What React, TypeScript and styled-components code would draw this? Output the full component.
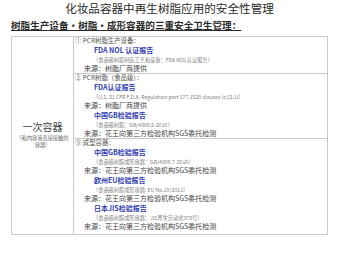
import React from "react";
import styled, { createGlobalStyle, css } from "styled-components";

const GlobalStyle = createGlobalStyle`
  html, body { margin: 0; padding: 0; background: #ffffff; }
  body { font-family: "Noto Sans CJK SC", "Noto Sans", sans-serif; color: #333; }
`;

const Page = styled.div`
  width: 340px;
  height: 255px;
  box-sizing: border-box;
  padding: 1px 12px 0 11px;
  overflow: hidden;
`;

const Title = styled.h1`
  margin: 0;
  font-size: 11.6px;
  line-height: 15px;
  font-weight: 400;
  text-align: center;
  color: #2a2a2a;
`;

const Subtitle = styled.h2`
  margin: 2px 0 0 0;
  font-size: 9.6px;
  line-height: 14px;
  font-weight: 700;
  color: #2a2a2a;
  text-decoration: underline;
  text-underline-offset: 1px;
  text-decoration-thickness: 1px;
`;

const Table = styled.div`
  margin-top: 3.5px;
  display: flex;
  border: 1px solid #c9c9c9;
`;

const SideCell = styled.div`
  flex: 0 0 61px;
  border-right: 1px solid #c9c9c9;
  display: flex;
  flex-direction: column;
  align-items: center;
  justify-content: center;
  padding-bottom: 2px;
`;

const SideMain = styled.div`
  font-size: 10px;
  line-height: 13px;
  color: #444;
`;

const SideNote = styled.div`
  font-size: 5.2px;
  line-height: 7px;
  color: #666;
  text-align: center;
  margin-top: 1px;
`;

const Sections = styled.div`
  flex: 1;
  display: flex;
  flex-direction: column;
`;

const Section = styled.div<{ $last?: boolean }>`
  display: flex;
  flex-direction: column;
  ${(p) =>
    p.$last
      ? css`padding-bottom: 3px;`
      : css`border-bottom: 1px solid #c9c9c9;`}
`;

type Kind = "head" | "cert" | "note" | "src";

const kinds = {
  head: css`
    font-size: 6.4px;
    line-height: 8px;
    color: #555;
    padding-left: 1px;
  `,
  cert: css`
    font-size: 7px;
    line-height: 10.5px;
    font-weight: 700;
    color: #3340b0;
    padding-left: 20px;
  `,
  note: css`
    font-size: 5.2px;
    line-height: 9px;
    color: #808080;
    padding-left: 19px;
  `,
  src: css`
    font-size: 7px;
    line-height: 8.5px;
    color: #444;
    padding-left: 10px;
  `,
};

const Line = styled.div<{ $kind: Kind }>`
  white-space: nowrap;
  ${(p) => kinds[p.$kind]}
`;

type Item = [Kind, string];

const sections: Item[][] = [
  [
    ["head", "① PCR树脂生产设备："],
    ["cert", "FDA NOL 认证报告"],
    ["note", "（食品级树脂制造工艺和设备：FDA NOL认证报告）"],
    ["src", "来源：树脂厂商提供"],
  ],
  [
    ["head", "② PCR树脂（食品级）："],
    ["cert", "FDA认证报告"],
    ["note", "（U.S. 21 CFR F.D.A. Regulation part 177.1520 clauses (c)(2.1)）"],
    ["src", "来源：树脂厂商提供"],
    ["cert", "中国GB检验报告"],
    ["note", "（食品级树脂：GB/4806.6-2016）"],
    ["src", "来源：花王向第三方检验机构SGS委托检测"],
  ],
  [
    ["head", "③ 成型容器："],
    ["cert", "中国GB检验报告"],
    ["note", "（食品级树脂成形容器：GB/4806.7-2016）"],
    ["src", "来源：花王向第三方检验机构SGS委托检测"],
    ["cert", "欧州EU检验报告"],
    ["note", "（食品级树脂成形容器: EU No.10/2011）"],
    ["src", "来源：花王向第三方检验机构SGS委托检测"],
    ["cert", "日本JIS检验报告"],
    ["note", "（食品级树脂成形容器：JIS厚生劳动省370号）"],
    ["src", "来源：花王向第三方检验机构SGS委托检测"],
  ],
];

export default function App() {
  return (
    <>
      <GlobalStyle />
      <Page>
        <Title>化妆品容器中再生树脂应用的安全性管理</Title>
        <Subtitle>树脂生产设备·树脂·成形容器的三重安全卫生管理：</Subtitle>
        <Table>
          <SideCell>
            <SideMain>一次容器</SideMain>
            <SideNote>
              （和内容液直接接触的
              <br />
              容器）
            </SideNote>
          </SideCell>
          <Sections>
            {sections.map((sec, i) => (
              <Section key={i} $last={i === sections.length - 1}>
                {sec.map(([k, t], j) => (
                  <Line key={j} $kind={k}>
                    {t}
                  </Line>
                ))}
              </Section>
            ))}
          </Sections>
        </Table>
      </Page>
    </>
  );
}
